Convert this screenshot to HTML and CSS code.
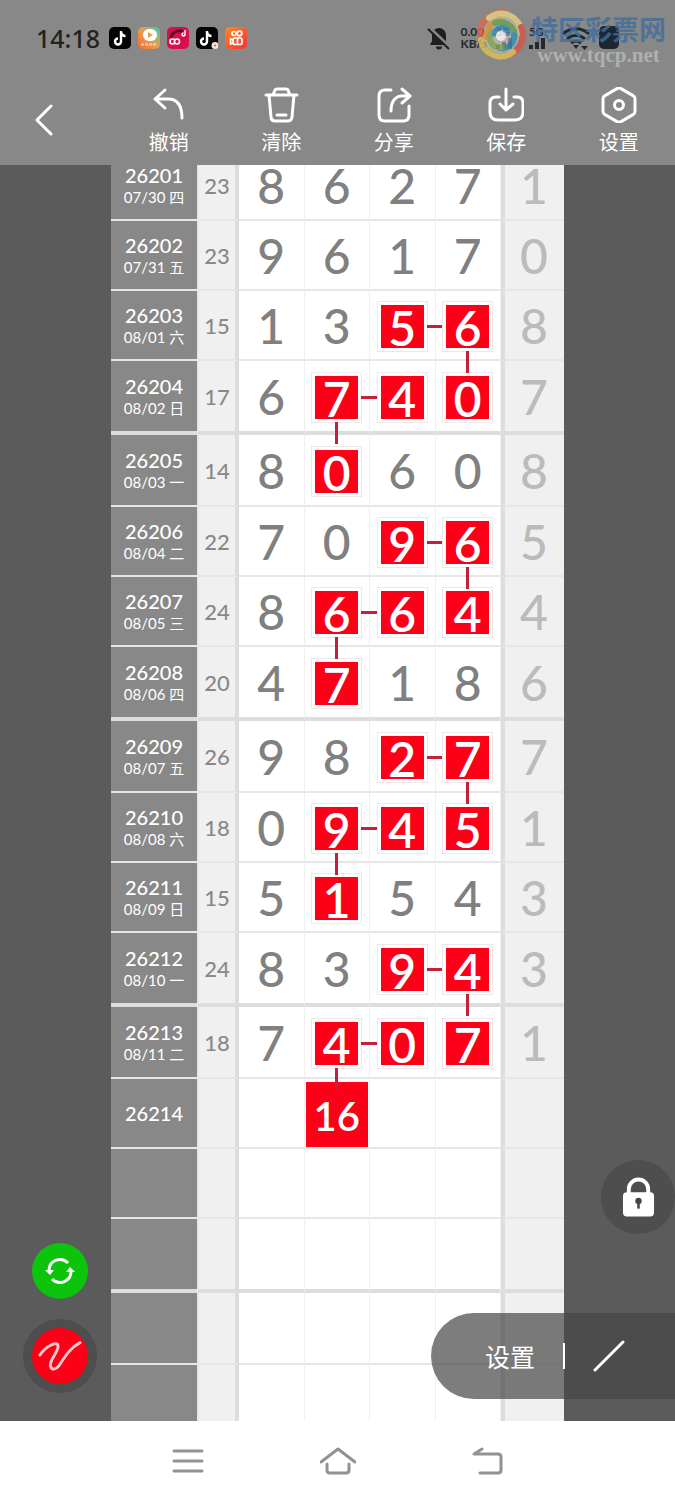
FILE: index.html
```html
<!DOCTYPE html>
<html lang="zh-CN">
<head>
    <meta charset="UTF-8">
    <meta name="viewport" content="width=device-width, initial-scale=1.0">
    <title>走势图</title>
    <link rel="stylesheet" href="styles.css">
</head>
<body>
    <header class="header">
        <!-- 状态栏 -->
        <div class="status">
            <span class="time">14:18</span>
            <svg class="app" viewBox="0 0 22 22"><rect width="22" height="22" rx="5" fill="#050505"/><path d="M12 4v10.500a3 3 0 1 1-3-3M12 5c.5 2.500 2 4 4.500 4" fill="none" stroke="#fff" stroke-width="2.400"/></svg>
            <svg class="app" viewBox="0 0 22 22"><defs><linearGradient id="g1" x1="1" y1="0" x2="0" y2="1"><stop offset="0" stop-color="#35d0b0"/><stop offset=".5" stop-color="#e8a050"/><stop offset="1" stop-color="#f5692d"/></linearGradient></defs><rect width="22" height="22" rx="5" fill="url(#g1)"/><rect x="5" y="2" width="14" height="12" rx="6" fill="#fff"/><path d="M10 5l5 3-5 3z" fill="#e89a50"/><path d="M3 17.500h15" stroke="#ffc9a5" stroke-width="2" stroke-dasharray="3 1"/></svg>
            <svg class="app" viewBox="0 0 22 22"><rect width="22" height="22" rx="5" fill="#d80f4c"/><path d="M4 11a8 8 0 0 1 12-6" fill="none" stroke="#5a0c25" stroke-width="3"/><circle cx="5.500" cy="14.500" r="2.500" fill="#d80f4c" stroke="#fff" stroke-width="1.600"/><circle cx="10" cy="14.500" r="2.500" fill="#d80f4c" stroke="#fff" stroke-width="1.600"/><path d="M18 3v4.500a1.500 1.500 0 1 1-1.500-1.500" fill="none" stroke="#fff" stroke-width="1.400"/></svg>
            <svg class="app" viewBox="0 0 22 22"><rect width="22" height="22" rx="5" fill="#050505"/><path d="M11 4v10.500a3 3 0 1 1-3-3M11 5c.5 2.500 2 4 4.500 4" fill="none" stroke="#fff" stroke-width="2.400"/><circle cx="19" cy="18.500" r="3.500" fill="#f6e3dc"/><circle cx="19" cy="18.500" r="1" fill="#d85040"/></svg>
            <svg class="app" viewBox="0 0 22 22"><defs><linearGradient id="g2" x1="0" y1="0" x2="1" y2="1"><stop offset="0" stop-color="#ff8a1f"/><stop offset="1" stop-color="#f5303c"/></linearGradient></defs><rect width="22" height="22" rx="5" fill="url(#g2)"/><g fill="none" stroke="#fff" stroke-width="1.700"><circle cx="9" cy="6.500" r="2"/><circle cx="14.500" cy="6.500" r="2.300"/><rect x="8" y="11" width="9" height="6.500" rx="2"/><path d="M8 13l-2.500-1v5l2.500-1M12.500 11v6"/></g></svg>

            <div class="signals">
                <svg class="bell" viewBox="0 0 24 24"><path d="M12 2a7 7 0 0 0-7 7v6l-2 4h18l-2-4V9a7 7 0 0 0-7-7zM9 20.500h6a3 3 0 0 1-6 0z" fill="#1d1f20"/><path d="M3 2l20 19" stroke="#888" stroke-width="3"/><path d="M1 3l21 20" stroke="#1d1f20" stroke-width="2"/></svg>
                <span class="speed">0.00<br>KB/s</span>
                <div class="cell"><span>5G</span><svg viewBox="0 0 18 12"><path d="M2 12V8M8 12V5M14 12V1" stroke="#23282b" stroke-width="4"/></svg></div>
                <div class="cell"><span>5G</span><svg viewBox="0 0 18 12"><path d="M2 12V8M8 12V5M14 12V1" stroke="#23282b" stroke-width="4"/></svg></div>
                <svg class="wifi" viewBox="0 0 28 24"><g fill="none" stroke="#1f2a30" stroke-width="3"><path d="M1 8a19 19 0 0 1 26 0M5 13a13 13 0 0 1 18 0M9 17a8 8 0 0 1 10 0"/></g><path d="M11 19h6l-3 4zM19 20h7l-3.500 4z" fill="#1f2a30"/></svg>
                <svg class="battery" viewBox="0 0 20 24"><rect width="20" height="23" rx="5" fill="#1b2833"/></svg>
            </div>

            <div class="watermark">
                <svg viewBox="0 0 52 52"><circle cx="26" cy="26" r="18" fill="#e5ddd0" opacity=".6"/><g fill="none" stroke-width="6" stroke-linecap="round"><path d="M5 28C3 12 16 2 30 4" stroke="#df6b50"/><path d="M14 9C28-1 46 8 46 24" stroke="#e8d283"/><path d="M46 18c6 14-4 28-18 29" stroke="#d85645"/><path d="M38 43C26 53 8 45 6 31" stroke="#dfc252"/><path d="M12 28c-2-10 8-18 17-15" stroke="#e59a35"/><path d="M20 14c12-4 22 6 19 16" stroke="#67a657"/><path d="M39 26c1 10-9 16-17 12" stroke="#3b8fbd"/><path d="M27 38c-10 2-15-8-10-15" stroke="#8bb05a"/><path d="M19 25c1-8 12-9 14-2" stroke="#348fc0" stroke-width="5"/></g><circle cx="26" cy="27" r="5" fill="#fff"/></svg>
                <div class="watermark-text"><b>特区彩票网</b><span>www.tqcp.net</span></div>
            </div>
        </div>

        <!-- 工具栏 -->
        <nav class="toolbar">
            <button class="back" aria-label="返回"><svg viewBox="0 0 20 32"><path d="M17 2L3 16l14 14"/></svg></button>
            <button class="tool"><svg viewBox="0 0 36 36"><path d="M14 3L4 12l10 9M5 12h12c9 0 14 6 14 19"/></svg>撤销</button>
            <button class="tool"><svg viewBox="0 0 36 36"><path d="M3 8h31M10 8l2-5q.5-1 2-1h9q1.500 0 2 1l2 5M6 8l2 22q.3 4 4 4h13q3.700 0 4-4l2-22M14 28h9"/></svg>清除</button>
            <button class="tool"><svg viewBox="0 0 36 36"><path d="M15 3H9q-6 0-6 6v19q0 6 6 6h18q6 0 6-6v-9M15 24c0-9 4-15 11-15h7M26 2l8 7-8 7"/></svg>分享</button>
            <button class="tool"><svg viewBox="0 0 36 36"><path d="M11 10H8q-6 0-6 6v9q0 8 8 8h17q8 0 8-8v-9q0-6-6-6h-3M18 2v20M12 17l6 6 7-6"/></svg>保存</button>
            <button class="tool"><svg viewBox="0 0 36 36"><path d="M18 1q1 0 2 .6l12 7q2 1 2 3v13q0 2-2 3l-12 7q-2 1-4 0l-12-7q-2-1-2-3v-13q0-2 2-3l12-7q1-.6 2-.6z"/><circle cx="18" cy="18" r="4.500"/></svg>设置</button>
        </nav>
    </header>

    <!-- 走势表 -->
    <main class="board">
        <table class="chart">
            <colgroup>
                <col class="col-issue"><col class="col-sum"><col><col><col><col><col class="col-last">
            </colgroup>
            <tbody id="rows"></tbody>
        </table>

        <button class="round refresh" aria-label="刷新"><svg viewBox="0 0 32 32"><path d="M5 15a11 11 0 0 1 19-7M27 17a11 11 0 0 1-19 7" fill="none" stroke="#fff" stroke-width="3"/><path d="M1 15h9l-4 5zM22 17h9l-5-5z" fill="#fff"/></svg></button>
        <button class="round draw" aria-label="画笔"><svg viewBox="0 0 46 34"><path d="M2 16C8 7 21 0 21 7c0 6-9 14-8 20 1 6 6 4 9 0C28 18 34 8 44 3" fill="none" stroke="#ffc9c9" stroke-width="3" stroke-linecap="round"/></svg></button>
        <button class="round lock" aria-label="锁定"><svg viewBox="0 0 34 40"><path d="M7 17V12a10 10 0 0 1 20 0v5" fill="none" stroke="#fff" stroke-width="4"/><rect x="1" y="15" width="32" height="25" rx="4" fill="#fff"/><circle cx="17" cy="24" r="3.300" fill="#444"/><path d="M17 24v8" stroke="#444" stroke-width="2.600"/></svg></button>
        <div class="panel">
            <button>设置</button>
            <i class="divider"></i>
            <button class="line" aria-label="直线"><svg viewBox="0 0 32 32"><path d="M2 30L30 2" stroke="#fff" stroke-width="3" stroke-linecap="round"/></svg></button>
        </div>
    </main>

    <!-- 系统导航 -->
    <footer class="sysnav">
        <button aria-label="菜单"><svg viewBox="0 0 36 30"><path d="M4 5h28M4 15h28M4 25h28"/></svg></button>
        <button aria-label="主页"><svg viewBox="0 0 36 30"><path d="M1 16L18 3l17 13M7 18v6q0 3 3 3h16q3 0 3-3v-6"/></svg></button>
        <button aria-label="后退"><svg viewBox="0 0 36 30"><path d="M12 3L4 8h24q3 0 3 3v13q0 3-3 3H10"/></svg></button>
    </footer>

    <script src="script.js"></script>
</body>
</html>
```

FILE: styles.css
```css
* {
    margin: 0;
    padding: 0;
    box-sizing: border-box;
}

body {
    display: flex;
    flex-direction: column;
    height: 100vh;
    overflow: hidden;
    background: #fff;
    font-family: Lato, "Noto Sans CJK SC", sans-serif;
}

button {
    border: 0;
    background: none;
    color: inherit;
    font: inherit;
    cursor: pointer;
}

svg {
    display: block;
}

/* 顶部 */
.header {
    position: relative;
    z-index: 2;
    background: #888;
    color: #fff;
}

.status {
    position: relative;
    display: flex;
    align-items: center;
    gap: 7px;
    height: 75px;
    padding: 0 36px;
}

.time {
    margin-right: 2px;
    color: #222;
    font-family: "Noto Sans", sans-serif;
    font-size: 25px;
    font-weight: 500;
}

.app {
    width: 22px;
    height: 22px;
}

.signals {
    display: flex;
    align-items: center;
    gap: 9px;
    margin-left: auto;
    padding-right: 20px;
    color: #23282b;
    font-weight: 700;
}

.bell {
    width: 24px;
    height: 24px;
}

.speed {
    font-size: 12px;
    line-height: 12px;
}

.cell {
    width: 24px;
    font-size: 11px;
    line-height: 11px;
}

.cell svg {
    width: 18px;
    height: 12px;
}

.wifi {
    width: 28px;
    height: 24px;
}

.battery {
    width: 20px;
    height: 24px;
}

.watermark {
    position: absolute;
    top: 8px;
    right: 9px;
    display: flex;
    gap: 4px;
    opacity: 0.8;
}

.watermark svg {
    width: 52px;
    height: 54px;
}

.watermark-text {
    display: flex;
    flex-direction: column;
    align-items: center;
    padding-top: 7px;
}

.watermark b {
    color: #3f6e9e;
    font-size: 27px;
    line-height: 30px;
}

.watermark span {
    color: #bbb;
    font: bold 21px/20px "Liberation Serif", serif;
}

.toolbar {
    display: flex;
    height: 90px;
}

.toolbar svg {
    fill: none;
    stroke: #fff;
    stroke-width: 3;
    stroke-linecap: round;
    stroke-linejoin: round;
}

.back,
.tool {
    width: calc(100% / 6);
    display: flex;
    flex-direction: column;
    align-items: center;
}

.back {
    justify-content: center;
    padding-right: 24px;
}

.back svg {
    width: 20px;
    height: 32px;
}

.tool {
    gap: 7px;
    padding-top: 12px;
    font-size: 20px;
    line-height: 24px;
}

.tool svg {
    width: 36px;
    height: 36px;
}

/* 走势表 */
.board {
    position: relative;
    flex: 1;
    min-height: 0;
    overflow: hidden;
    background: #5b5b5b;
}

.chart {
    width: calc(100% - 222px);
    margin: -14px auto 0;
    table-layout: fixed;
    border-collapse: separate;
    border-spacing: 0;
    background: #fff;
}

.col-issue {
    width: 86px;
}

.col-sum {
    width: 42px;
}

.col-last {
    width: 63px;
}

.chart th,
.chart td {
    height: 70px;
    border-bottom: 2px solid #e6e6e6;
    text-align: center;
    vertical-align: middle;
}

.chart .first > * {
    height: 72px;
}

.chart .last > * {
    height: 74px;
    border-bottom: 4px solid #ddd;
}

.chart .issue {
    background: #888;
    color: #fff;
    font-size: 20px;
    font-weight: 500;
    line-height: 24px;
}

.issue small {
    display: block;
    font-size: 15px;
    font-weight: 400;
    line-height: 20px;
}

.chart .sum {
    border-left: 2px solid #e6e6e6;
    border-right: 4px solid #ddd;
    background: #f0f0f0;
    color: #888;
    font-size: 22px;
    font-weight: 500;
}

.chart .num {
    padding-top: 2px;
    border-right: 1px solid #f0f0f0;
    color: #808080;
    font-size: 48px;
    font-weight: 500;
    line-height: 48px;
}

.chart .tail {
    border-left: 4px solid #ddd;
    background: #f0f0f0;
    color: #bbb;
}

/* 红色标记与连线 */
.mark {
    position: relative;
    display: block;
    width: 43px;
    height: 43px;
    margin: 0 auto;
    background: #fb0017;
    box-shadow: 0 0 0 3px #fff, 0 0 0 4px #f0e6e8;
    color: #fff;
    font-weight: 600;
    line-height: 46px;
}

.mark.big {
    width: 62px;
    height: 65px;
    box-shadow: none;
    font-size: 40px;
    line-height: 68px;
}

.right::before,
.down::after {
    content: "";
    position: absolute;
    background: #c3203a;
}

.right::before {
    top: 20px;
    left: 46px;
    width: 17px;
    height: 3px;
}

.down::after {
    top: 46px;
    left: 20px;
    z-index: 1;
    width: 3px;
    height: 22px;
}

/* 悬浮按钮 */
.round {
    position: absolute;
    display: flex;
    align-items: center;
    justify-content: center;
    border-radius: 50%;
}

.refresh {
    left: 32px;
    bottom: 122px;
    width: 56px;
    height: 56px;
    background: #0bc40b;
}

.refresh svg {
    width: 32px;
    height: 32px;
}

.draw {
    left: 23px;
    bottom: 28px;
    width: 74px;
    height: 74px;
    border: 9px solid #4e4e4e;
    background: #fb0017;
}

.draw svg {
    width: 44px;
    height: 34px;
}

.lock {
    right: 0;
    bottom: 187px;
    width: 74px;
    height: 74px;
    background: #4e4e4e;
}

.lock svg {
    width: 33px;
    height: 40px;
}

.panel {
    position: absolute;
    right: 0;
    bottom: 22px;
    display: flex;
    align-items: center;
    gap: 28px;
    height: 86px;
    padding: 0 50px 0 54px;
    border-radius: 43px 0 0 43px;
    background: rgba(70, 70, 70, 0.7);
    color: #fff;
    font-size: 25px;
}

.divider {
    width: 2px;
    height: 26px;
    background: #fff;
}

.line svg {
    width: 32px;
    height: 32px;
}

/* 系统导航 */
.sysnav {
    display: flex;
    justify-content: center;
    gap: 114px;
    height: 79px;
}

.sysnav svg {
    width: 36px;
    height: 30px;
    fill: none;
    stroke: #929292;
    stroke-width: 3;
    stroke-linecap: round;
    stroke-linejoin: round;
}
```

FILE: script.js
```js
// r - 向右连线, d - 向下连线, m - 仅标记, b - 大标记
const data = [
    ['26201', '07/30 四', 23, '8', '6', '2', '7', 1],
    ['26202', '07/31 五', 23, '9', '6', '1', '7', 0],
    ['26203', '08/01 六', 15, '1', '3', '5r', '6d', 8],
    ['26204', '08/02 日', 17, '6', '7rd', '4m', '0m', 7],
    ['26205', '08/03 一', 14, '8', '0m', '6', '0', 8],
    ['26206', '08/04 二', 22, '7', '0', '9r', '6d', 5],
    ['26207', '08/05 三', 24, '8', '6rd', '6m', '4m', 4],
    ['26208', '08/06 四', 20, '4', '7m', '1', '8', 6],
    ['26209', '08/07 五', 26, '9', '8', '2r', '7d', 7],
    ['26210', '08/08 六', 18, '0', '9rd', '4m', '5m', 1],
    ['26211', '08/09 日', 15, '5', '1m', '5', '4', 3],
    ['26212', '08/10 一', 24, '8', '3', '9r', '4d', 3],
    ['26213', '08/11 二', 18, '7', '4rd', '0m', '7m', 1],
    ['26214', '', '', '', '16b', '', '', ''],
    ['', '', '', '', '', '', '', ''],
    ['', '', '', '', '', '', '', ''],
    ['', '', '', '', '', '', '', ''],
    ['', '', '', '', '', '', '', '']
];

const names = { r: 'right', d: 'down', b: 'big', m: '' };

function cell(value) {
    const digits = value.replace(/\D/g, '');
    const flags = value.replace(/\d/g, '');
    if (!flags) return `<td class="num">${digits}</td>`;
    const cls = [...flags].map(f => names[f]).join(' ');
    return `<td class="num"><span class="mark ${cls}">${digits}</span></td>`;
}

document.getElementById('rows').innerHTML = data.map((row, i) => {
    const [issue, date, sum, a, b, c, d, tail] = row;
    const edge = i % 4 === 3 ? 'last' : (i % 4 === 0 && i > 0 ? 'first' : '');
    return `<tr class="${edge}">
        <th class="issue">${issue}${date ? `<small>${date}</small>` : ''}</th>
        <td class="sum">${sum}</td>
        ${[a, b, c, d].map(cell).join('')}
        <td class="num tail">${tail}</td>
    </tr>`;
}).join('');
```
